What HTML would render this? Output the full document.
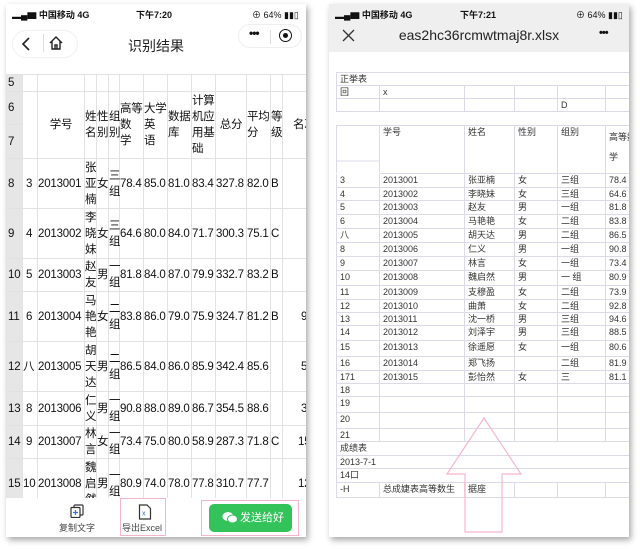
<!DOCTYPE html>
<html><head><meta charset="utf-8">
<style>
*{margin:0;padding:0;box-sizing:border-box}
body{width:640px;height:549px;background:#fff;position:relative;overflow:hidden;font-family:"Liberation Sans","Noto Sans CJK SC",sans-serif;color:#111}
.abs{position:absolute}
.panel{position:absolute;background:#fff;box-shadow:2px 3px 6px rgba(0,0,0,.35);overflow:hidden}
.sb{position:absolute;top:0;left:0;right:0;height:18px;font-size:9px;font-weight:bold}
.sb span{position:absolute;top:4px}
table{border-collapse:collapse;table-layout:fixed}
#lt td{border:1px solid #e2e2e2;padding:0;font-size:11.5px;line-height:16px;vertical-align:middle;text-align:left;white-space:nowrap;overflow:visible;letter-spacing:-0.2px}
#lt td.rh{background:#e6e6e6;padding-left:1px}
#rt td,#rt0 td{border:1px solid #dcdae8;padding:1px 0 0 3px;font-size:9px;line-height:10px;vertical-align:top;white-space:nowrap;overflow:hidden;color:#333}
</style></head><body>

<!-- LEFT PHONE -->
<div class="panel" style="left:6px;top:4px;width:300px;height:533px">
 <div class="sb"><span style="left:6px">▂▄▆ 中国移动 4G</span><span style="left:130px">下午7:20</span><span style="left:246px;font-weight:normal">⊕ 64% ▮▮▯</span></div>
 <div class="abs" style="left:6px;top:26px;width:66px;height:28px;border:1px solid #f0f0f0;border-radius:14px"></div>
 <svg class="abs" style="left:14px;top:32px" width="12" height="16"><path d="M9 2 L3 8 L9 14" stroke="#222" stroke-width="1.6" fill="none"/></svg>
 <div class="abs" style="left:37px;top:30px;width:1px;height:18px;background:#ddd"></div>
 <svg class="abs" style="left:42px;top:31px" width="16" height="16"><path d="M2 8 L8 2 L14 8 M4 6 V14 H12 V6 M7 14 V10 H9 V14" stroke="#222" stroke-width="1.4" fill="none"/></svg>
 <div class="abs" style="left:0;width:300px;top:32px;text-align:center;font-size:14px;color:#222">识别结果</div>
 <div class="abs" style="left:232px;top:20px;width:64px;height:24px;border:1px solid #eee;border-radius:12px"></div>
 <div class="abs" style="left:243px;top:22px;font-size:12px;font-weight:bold;letter-spacing:-1px">•••</div>
 <div class="abs" style="left:264px;top:26px;width:1px;height:14px;background:#ddd"></div>
 <div class="abs" style="left:273px;top:25px;width:13px;height:13px;border:1.6px solid #111;border-radius:50%"></div>
 <div class="abs" style="left:277px;top:29px;width:5px;height:5px;background:#111;border-radius:50%"></div>

 <div class="abs" style="left:0;top:70px;width:300px;height:424px;overflow:hidden">
 <table id="lt" style="width:324px">
  <colgroup><col style="width:16px"><col style="width:15px"><col style="width:47px"><col style="width:12px"><col style="width:12px"><col style="width:11px"><col style="width:24px"><col style="width:24px"><col style="width:24px"><col style="width:24px"><col style="width:31px"><col style="width:24px"><col style="width:12px"><col style="width:48px"></colgroup>
  <tr style="height:14px"><td class="rh">5</td><td></td><td></td><td></td><td></td><td></td><td></td><td></td><td></td><td></td><td></td><td></td><td></td><td></td></tr>
  <tr style="height:33px"><td class="rh">6</td><td rowspan="2"></td><td rowspan="2" style="text-align:center">学号</td><td rowspan="2">姓<br>名</td><td rowspan="2">性<br>别</td><td rowspan="2">组<br>别</td><td rowspan="2">高等<br>数<br>学</td><td rowspan="2">大学<br>英<br>语</td><td rowspan="2">数据<br>库</td><td rowspan="2">计算<br>机应<br>用基<br>础</td><td rowspan="2" style="text-align:center">总分</td><td rowspan="2">平均<br>分</td><td rowspan="2">等<br>级</td><td rowspan="2" style="padding-left:10px">名次</td></tr>
  <tr style="height:34px"><td class="rh">7</td></tr>
  <tr style="height:50px"><td class="rh">8</td><td>&nbsp;3</td><td>2013001</td><td>张<br>亚<br>楠</td><td>女</td><td>三<br>组</td><td>78.4</td><td>85.0</td><td>81.0</td><td>83.4</td><td>327.8</td><td>82.0</td><td>B</td><td></td></tr>
  <tr style="height:50px"><td class="rh">9</td><td>&nbsp;4</td><td>2013002</td><td>李<br>晓<br>妹</td><td>女</td><td>三<br>组</td><td>64.6</td><td>80.0</td><td>84.0</td><td>71.7</td><td>300.3</td><td>75.1</td><td>C</td><td></td></tr>
  <tr style="height:33px"><td class="rh">10</td><td>&nbsp;5</td><td>2013003</td><td>赵<br>友</td><td>男</td><td>一<br>组</td><td>81.8</td><td>84.0</td><td>87.0</td><td>79.9</td><td>332.7</td><td>83.2</td><td>B</td><td></td></tr>
  <tr style="height:50px"><td class="rh">11</td><td>&nbsp;6</td><td>2013004</td><td>马<br>艳<br>艳</td><td>女</td><td>二<br>组</td><td>83.8</td><td>86.0</td><td>79.0</td><td>75.9</td><td>324.7</td><td>81.2</td><td>B</td><td style="padding-left:18px">9</td></tr>
  <tr style="height:50px"><td class="rh">12</td><td>八</td><td>2013005</td><td>胡<br>天<br>达</td><td>男</td><td>二<br>组</td><td>86.5</td><td>84.0</td><td>86.0</td><td>85.9</td><td>342.4</td><td>85.6</td><td></td><td style="padding-left:18px">5</td></tr>
  <tr style="height:34px"><td class="rh">13</td><td>&nbsp;8</td><td>2013006</td><td>仁<br>义</td><td>男</td><td>一<br>组</td><td>90.8</td><td>88.0</td><td>89.0</td><td>86.7</td><td>354.5</td><td>88.6</td><td></td><td style="padding-left:18px">3</td></tr>
  <tr style="height:33px"><td class="rh">14</td><td>&nbsp;9</td><td>2013007</td><td>林<br>言</td><td>女</td><td>一<br>组</td><td>73.4</td><td>75.0</td><td>80.0</td><td>58.9</td><td>287.3</td><td>71.8</td><td>C</td><td style="padding-left:15px">15</td></tr>
  <tr style="height:50px"><td class="rh">15</td><td>10</td><td>2013008</td><td>魏<br>启<br>然</td><td>男</td><td>一<br>组</td><td>80.9</td><td>74.0</td><td>78.0</td><td>77.8</td><td>310.7</td><td>77.7</td><td></td><td style="padding-left:15px">12</td></tr>
 </table>
 </div>

 <div class="abs" style="left:0;top:494px;width:300px;height:39px;background:#fff"></div>
 <svg class="abs" style="left:64px;top:500px" width="14" height="14"><rect x="4" y="1" width="9" height="10" rx="1" fill="none" stroke="#333" stroke-width="1.2"/><rect x="1" y="3.5" width="9" height="10" rx="1" fill="#fff" stroke="#333" stroke-width="1.2"/><path d="M5.5 6 V11 M3 8.5 H8" stroke="#3a6fe0" stroke-width="1.2"/></svg>
 <div class="abs" style="left:53px;top:517px;font-size:9px;color:#444">复制文字</div>
 <div class="abs" style="left:114px;top:494px;width:46px;height:38px;border:1px solid #f4b5c8"></div>
 <svg class="abs" style="left:132px;top:500px" width="14" height="16"><path d="M1.5 1 H9 L12.5 4.5 V15 H1.5 Z" fill="none" stroke="#333" stroke-width="1.2"/><text x="4" y="11.5" font-size="7" fill="#3a6fe0" font-family="Liberation Sans">x</text></svg>
 <div class="abs" style="left:116px;top:517px;font-size:9px;color:#444">导出Excel</div>
 <div class="abs" style="left:195px;top:496px;width:98px;height:36px;border:1px solid #f4b5c8"></div>
 <div class="abs" style="left:203px;top:500px;width:83px;height:28px;background:#34c35b;border-radius:5px;color:#fff;font-size:11px;line-height:28px;padding-left:31px">发送给好友</div>
 <svg class="abs" style="left:216px;top:507px" width="16" height="13"><ellipse cx="6" cy="5.5" rx="5.5" ry="4.5" fill="#fff"/><ellipse cx="10.5" cy="8" rx="5" ry="4" fill="#fff" stroke="#34c35b" stroke-width="1"/></svg>
</div>

<!-- RIGHT PHONE -->
<div class="panel" style="left:329px;top:4px;width:300px;height:533px">
 <div class="abs" style="left:0;top:0;width:300px;height:48px;background:#efefef"></div>
 <div class="sb"><span style="left:6px">▂▄▆ 中国移动 4G</span><span style="left:131px">下午7:21</span><span style="left:247px;font-weight:normal">⊕ 64% ▮▮▯</span></div>
 <svg class="abs" style="left:13px;top:25px" width="13" height="13"><path d="M1 1 L12 12 M12 1 L1 12" stroke="#333" stroke-width="1.3"/></svg>
 <div class="abs" style="left:0;width:300px;top:23px;text-align:center;font-size:14px;color:#222">eas2hc36rcmwtmaj8r.xlsx</div>
 <div class="abs" style="left:270px;top:23px;font-size:11px;font-weight:bold;letter-spacing:-1px">•••</div>

 <table id="rt0" class="abs" style="left:7px;top:68px;width:310px">
  <colgroup><col style="width:43px"><col style="width:85px"><col style="width:50px"><col style="width:43px"><col style="width:48px"><col style="width:41px"></colgroup>
  <tr style="height:13px"><td colspan="6">正挙表</td></tr>
  <tr style="height:13px"><td>回</td><td>x</td><td></td><td></td><td></td><td></td></tr>
  <tr style="height:13px"><td></td><td></td><td></td><td></td><td>D</td><td></td></tr>
 </table>

 <table id="rt" class="abs" style="left:7px;top:121px;width:310px">
  <colgroup><col style="width:43px"><col style="width:85px"><col style="width:50px"><col style="width:43px"><col style="width:48px"><col style="width:41px"></colgroup>
  <tr style="height:48px"><td style="border-bottom-color:#fff;background:linear-gradient(#fff 34px,#dcdae8 34px,#dcdae8 35px,#fff 35px)"></td><td>学号</td><td>姓名</td><td>性别</td><td>组别</td><td style="line-height:20px">高等数<br>学</td></tr>
  <tr style="height:14px"><td>3</td><td>2013001</td><td>张亚楠</td><td>女</td><td>三组</td><td>78.4</td></tr>
  <tr style="height:13px"><td>4</td><td>2013002</td><td>李晓妹</td><td>女</td><td>三组</td><td>64.6</td></tr>
  <tr style="height:14px"><td>5</td><td>2013003</td><td>赵友</td><td>男</td><td>一组</td><td>81.8</td></tr>
  <tr style="height:14px"><td>6</td><td>2013004</td><td>马艳艳</td><td>女</td><td>二组</td><td>83.8</td></tr>
  <tr style="height:14px"><td>八</td><td>2013005</td><td>胡天达</td><td>男</td><td>二组</td><td>86.5</td></tr>
  <tr style="height:14px"><td>8</td><td>2013006</td><td>仁义</td><td>男</td><td>一组</td><td>90.8</td></tr>
  <tr style="height:14px"><td>9</td><td>2013007</td><td>林言</td><td>女</td><td>一组</td><td>73.4</td></tr>
  <tr style="height:15px"><td>10</td><td>2013008</td><td>魏启然</td><td>男</td><td>一 组</td><td>80.9</td></tr>
  <tr style="height:14px"><td>11</td><td>2013009</td><td>支穆盈</td><td>女</td><td>二组</td><td>73.9</td></tr>
  <tr style="height:13px"><td>12</td><td>2013010</td><td>曲萧</td><td>女</td><td>二组</td><td>92.8</td></tr>
  <tr style="height:13px"><td>13</td><td>2013011</td><td>沈一桥</td><td>男</td><td>三组</td><td>94.6</td></tr>
  <tr style="height:15px"><td>14</td><td>2013012</td><td>刘泽宇</td><td>男</td><td>三组</td><td>88.5</td></tr>
  <tr style="height:16px"><td>15</td><td>2013013</td><td>徐遥愿</td><td>女</td><td>一组</td><td>80.6</td></tr>
  <tr style="height:14px"><td>16</td><td>2013014</td><td>郑飞扬</td><td></td><td>二组</td><td>81.9</td></tr>
  <tr style="height:13px"><td>171</td><td>2013015</td><td>彭怡然</td><td>女</td><td>三</td><td>81.1</td></tr>
  <tr style="height:13px"><td>18</td><td></td><td></td><td></td><td></td><td></td></tr>
  <tr style="height:16px"><td>19</td><td></td><td></td><td></td><td></td><td></td></tr>
  <tr style="height:16px"><td>20</td><td></td><td></td><td></td><td></td><td></td></tr>
  <tr style="height:13px"><td>21</td><td></td><td></td><td></td><td></td><td></td></tr>
  <tr style="height:14px"><td colspan="6">成绩表</td></tr>
  <tr style="height:13px"><td colspan="6">2013-7-1</td></tr>
  <tr style="height:14px"><td colspan="6">14口</td></tr>
  <tr style="height:15px"><td>-H</td><td>总成婕表高等数生</td><td>据座</td><td></td><td></td><td></td></tr>
 </table>

 <svg class="abs" style="left:0;top:0" width="300" height="533"><path d="M155 414 L118 470 L136 470 L136 528 L173 528 L173 470 L192 470 Z" fill="none" stroke="#f6b8cc" stroke-width="1.2"/></svg>
</div>
</body></html>
